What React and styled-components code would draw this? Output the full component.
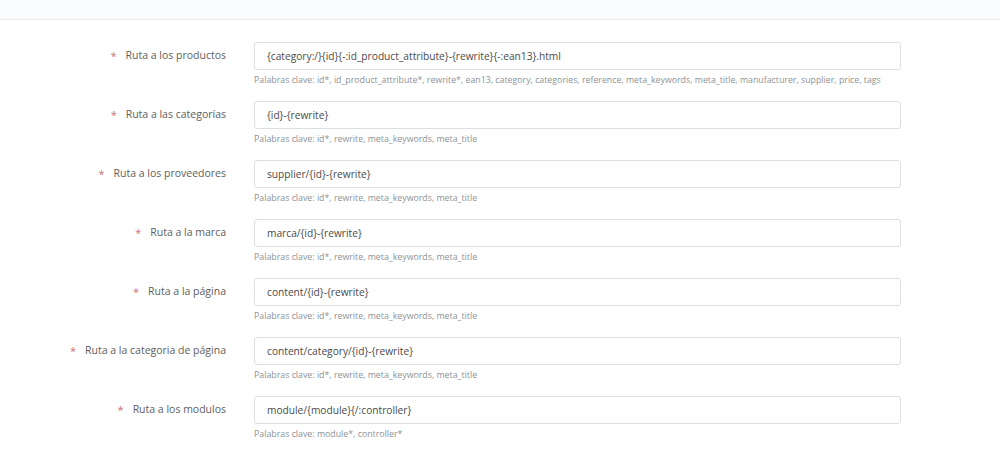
import React from "react";
import styled, { createGlobalStyle } from "styled-components";

const GlobalStyle = createGlobalStyle`
	html, body {
		margin: 0;
		padding: 0;
		background: #fff;
		font-family: "Open Sans", "Liberation Sans", sans-serif;
	}
	* { box-sizing: border-box; }
`;

const routes = [
	{
		label: "Ruta a los productos",
		value: "{category:/}{id}{-:id_product_attribute}-{rewrite}{-:ean13}.html",
		help: "Palabras clave: id*, id_product_attribute*, rewrite*, ean13, category, categories, reference, meta_keywords, meta_title, manufacturer, supplier, price, tags",
	},
	{ label: "Ruta a las categorías", value: "{id}-{rewrite}", help: "Palabras clave: id*, rewrite, meta_keywords, meta_title" },
	{ label: "Ruta a los proveedores", value: "supplier/{id}-{rewrite}", help: "Palabras clave: id*, rewrite, meta_keywords, meta_title" },
	{ label: "Ruta a la marca", value: "marca/{id}-{rewrite}", help: "Palabras clave: id*, rewrite, meta_keywords, meta_title" },
	{ label: "Ruta a la página", value: "content/{id}-{rewrite}", help: "Palabras clave: id*, rewrite, meta_keywords, meta_title" },
	{ label: "Ruta a la categoria de página", value: "content/category/{id}-{rewrite}", help: "Palabras clave: id*, rewrite, meta_keywords, meta_title" },
	{ label: "Ruta a los modulos", value: "module/{module}{/:controller}", help: "Palabras clave: module*, controller*" },
];

const App = () => {
	return (
		<>
			<GlobalStyle />
			<TopBar />
			<Form>
				{routes.map((r) => (
					<Row key={r.label}>
						<Label>
							<Required>*</Required>
							{r.label}
						</Label>
						<Field>
							<Input type="text" defaultValue={r.value} readOnly />
							<Help>{r.help}</Help>
						</Field>
					</Row>
				))}
			</Form>
		</>
	);
};

const TopBar = styled.div`
	height: 20px;
	background: #fafbfc;
	border-bottom: 1px solid #e9ecee;
`;

const Form = styled.div`
	padding: 22px 0 20px;
	display: flex;
	flex-direction: column;
	gap: 14px;
`;

const Row = styled.div`
	display: grid;
	grid-template-columns: 226px 647px;
	column-gap: 28px;
`;

const Label = styled.label`
	display: flex;
	justify-content: flex-end;
	align-items: center;
	gap: 9px;
	height: 26px;
	font-size: 10.5px;
	color: #5e5e5e;
`;

const Required = styled.span`
	color: #d0707a;
	font-size: 11px;
`;

const Field = styled.div`
	display: flex;
	flex-direction: column;
`;

const Input = styled.input`
	height: 28px;
	width: 100%;
	padding: 0 12px;
	border: 1px solid #dadfe3;
	border-radius: 3px;
	font-family: "Open Sans", "Liberation Sans", sans-serif;
	font-size: 10.2px;
	color: #4a4a4a;
	background: #fff;
	outline: none;
`;

const Help = styled.div`
	margin-top: 3px;
	line-height: 14px;
	font-size: 8.8px;
	color: #8e9396;
	white-space: nowrap;
`;

export default App;
